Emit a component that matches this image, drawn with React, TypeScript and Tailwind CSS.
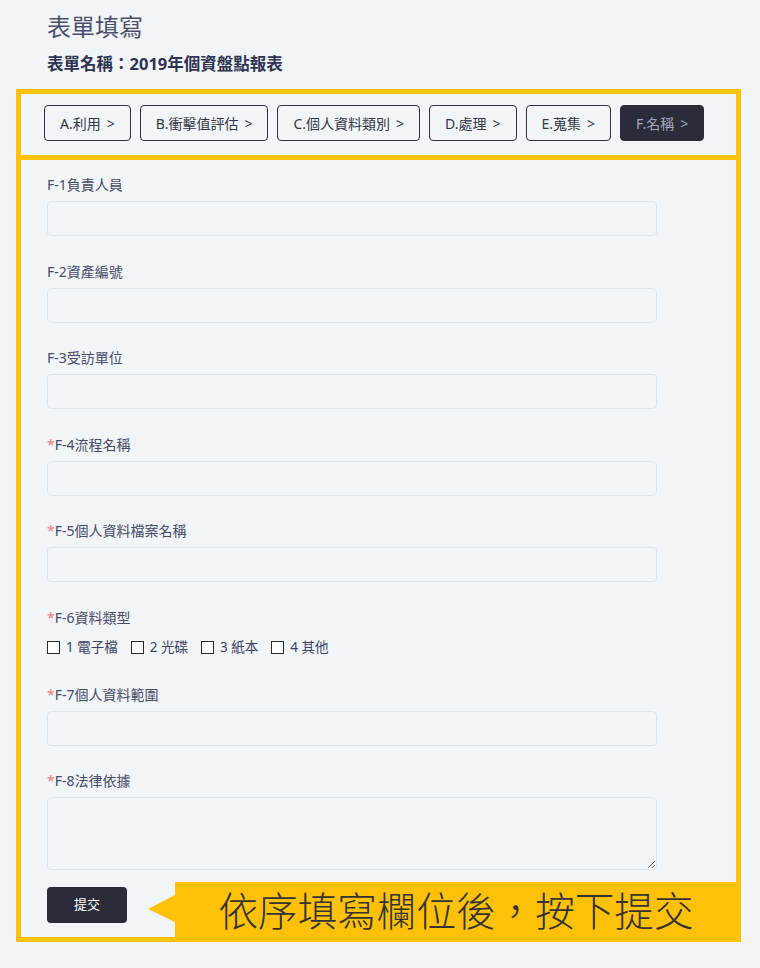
const tabs = ['A.利用', 'B.衝擊值評估', 'C.個人資料類別', 'D.處理', 'E.蒐集', 'F.名稱'];

const fields = [
  { label: 'F-1負責人員', required: false },
  { label: 'F-2資產編號', required: false },
  { label: 'F-3受訪單位', required: false },
  { label: 'F-4流程名稱', required: true },
  { label: 'F-5個人資料檔案名稱', required: true },
];

const mediaTypes = ['1 電子檔', '2 光碟', '3 紙本', '4 其他'];

function Label({ text, required }: { text: string; required: boolean }) {
  return (
    <div className="h-5 text-[14px] leading-5 text-[#474b66]">
      {required && <span className="text-[#f47a7a]">*</span>}
      {text}
    </div>
  );
}

function TextField({ label, required }: { label: string; required: boolean }) {
  return (
    <div className="mb-[25.5px]">
      <Label text={label} required={required} />
      <input className="mt-[6px] block h-[35px] w-[610px] rounded-[4px] border border-[#dfe4ea] bg-transparent outline-none" />
    </div>
  );
}

export default function App() {
  return (
    <div className="relative h-[968px] w-[760px] overflow-hidden bg-[#f1f5f8] font-['Noto_Sans','Noto_Sans_CJK_TC',sans-serif]">
      <header className="h-[89px] pl-[47px] pt-[10px]">
        <h1 className="h-8 font-['Noto_Sans_CJK_TC',serif] text-[24px] leading-8 text-[#4b4f6b]">表單填寫</h1>
        <p className="mt-[10px] text-[16.5px] font-bold leading-6 text-[#2d3350]">表單名稱：2019年個資盤點報表</p>
      </header>

      <div className="ml-4 h-[853px] w-[725px] border-[5px] border-[#ffc107]">
        <div className="flex h-[66px] gap-[9px] border-b-[5px] border-[#ffc107] pl-[23px] pt-[11px]">
          {tabs.map((tab, i) => {
            const active = i === tabs.length - 1;
            return (
              <button
                key={tab}
                type="button"
                className={`flex h-9 items-center rounded-[4px] border px-[15px] text-[14px] ${
                  active ? 'border-[#2b2c3a] bg-[#2b2c3a] text-[#a3a7ba]' : 'border-[#2f3040] text-[#333645]'
                }`}
              >
                {tab}
                <span className="ml-[6px]">&gt;</span>
              </button>
            );
          })}
        </div>

        <form className="pl-[26px] pt-[15px]" onSubmit={(e) => e.preventDefault()}>
          {fields.map((f) => (
            <TextField key={f.label} label={f.label} required={f.required} />
          ))}

          <div className="mb-[27px]">
            <Label text="F-6資料類型" required />
            <div className="mt-[10px] flex h-5 items-center gap-[13px] text-[13.5px] text-[#3d4160]">
              {mediaTypes.map((m) => (
                <label key={m} className="flex items-center gap-[6px]">
                  <span className="block h-[13px] w-[13px] border border-[#2a2a2a] bg-white" />
                  {m}
                </label>
              ))}
            </div>
          </div>

          <TextField label="F-7個人資料範圍" required />

          <div>
            <Label text="F-8法律依據" required />
            <textarea className="mt-[6px] block h-[73px] w-[610px] rounded-[4px] border border-[#dfe4ea] bg-transparent outline-none" />
          </div>

          <button type="submit" className="mt-[17px] h-9 w-20 rounded-[4px] bg-[#2b2c3a] text-[13px] text-white">
            提交
          </button>
        </form>
      </div>

      {/* annotation callout */}
      <div className="absolute left-[148px] top-[882px] flex h-[60px] w-[593px] items-center">
        <svg width="27" height="60" viewBox="0 0 27 60" className="shrink-0">
          <polygon points="0,27 27,13 27,40" fill="#ffc107" />
        </svg>
        <div className="flex h-[60px] flex-1 items-center justify-center bg-[#ffc107] pr-[4px] text-[39.6px] font-light leading-none text-[#333333]">
          依序填寫欄位後，按下提交
        </div>
      </div>
    </div>
  );
}
